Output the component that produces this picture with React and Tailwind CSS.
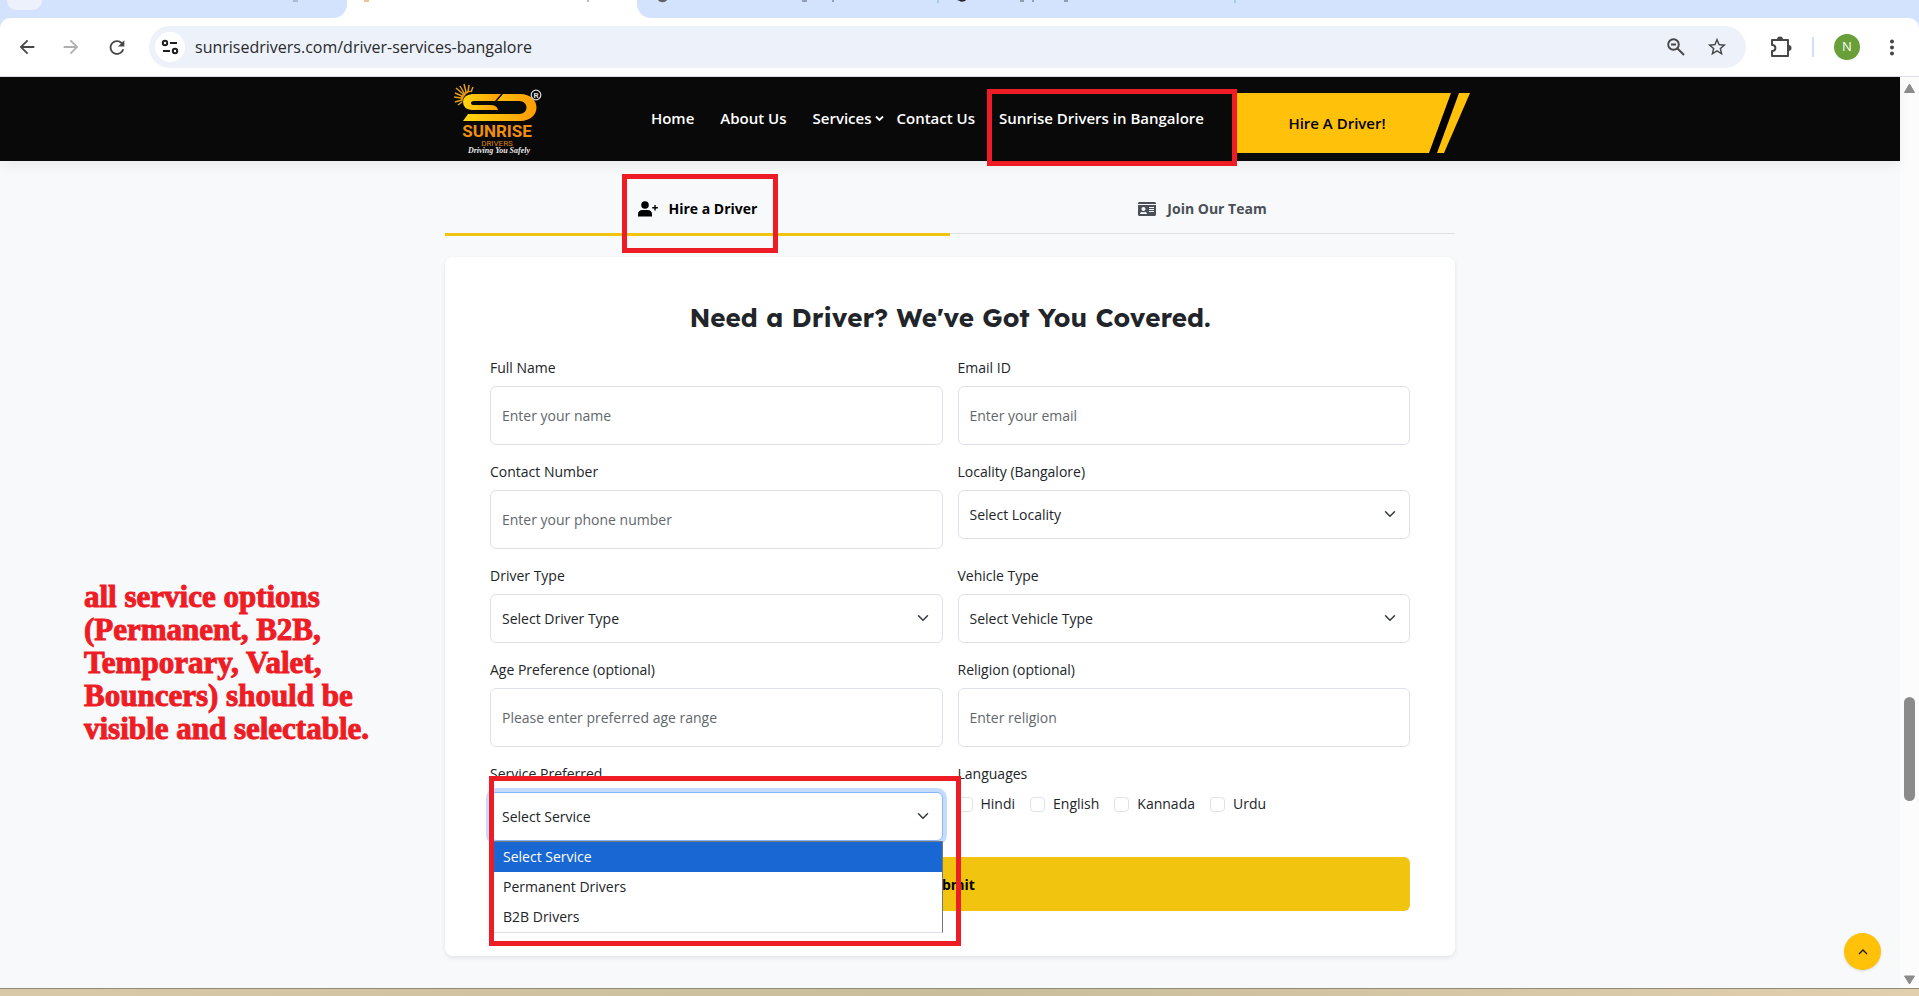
import { MdArrowBack, MdArrowForward, MdRefresh, MdStarBorder, MdMoreVert } from "react-icons/md";
import { FaIdCard } from "react-icons/fa";

const LANGUAGES = ["Hindi", "English", "Kannada", "Urdu"];

function Marker({ className }) {
  return <div aria-hidden="true" className={`pointer-events-none absolute z-20 border-[5px] border-[#ee1c24] ${className}`} />;
}

function TabStrip() {
  return (
    <div className="flex h-[18px] bg-white">
      <div className="h-full w-[347px] shrink-0 rounded-br-[14px] bg-[#d3e2fd]">
        <svg width="347" height="18" aria-hidden="true">
          <path d="M7 0h35c0 6-4 10-10 10H17C11 10 7 6 7 0z" fill="#ecf1fb" />
          <path d="M293 1h5" stroke="#8b93a3" strokeWidth="1" />
        </svg>
      </div>
      <div className="h-full w-[290px] shrink-0">
        <svg width="290" height="18" aria-hidden="true">
          <path d="M17 0h5v2h-5z" fill="#e8c58f" />
          <path d="M241 0v2" stroke="#777" />
        </svg>
      </div>
      <div className="h-full grow overflow-hidden rounded-bl-[14px] bg-[#d3e2fd]">
        <svg width="640" height="18" aria-hidden="true">
          <path d="M21 0h9c-2 3-7 3-9 0z" fill="#5f6368" />
          <path d="M165 1h5M196 0v2" stroke="#555b66" />
          <path d="M301 0v3M598 0v3" stroke="#a8c7fa" strokeWidth="2" />
          <path d="M320 0h9c-1 2-6 2-6 1z" fill="#222" />
          <path d="M383 1h4M396 0v2M427 1h4" stroke="#555b66" />
        </svg>
      </div>
    </div>
  );
}

function BrowserBar() {
  return (
    <div className="bg-[#d3e2fd]">
      <div className="flex h-[59px] items-center rounded-t-[10px] border-b border-[#dcdfe3] bg-white pr-[15px] pl-4 text-[#474747]">
        <button type="button" aria-label="Back" className="mr-[22px] flex size-[22px] items-center justify-center">
          <MdArrowBack size={22} />
        </button>
        <button type="button" aria-label="Forward" className="mr-6 flex size-[22px] items-center justify-center text-[#b0b0b0]">
          <MdArrowForward size={22} />
        </button>
        <button type="button" aria-label="Reload" className="mr-[21px] flex size-[22px] items-center justify-center">
          <MdRefresh size={23} />
        </button>
        <div className="flex h-[42px] grow items-center rounded-full bg-[#ecf1fa] pr-[18px] pl-[6px]">
          <button type="button" aria-label="Site information" className="flex size-[30px] shrink-0 items-center justify-center rounded-full bg-white">
            <svg width="18" height="18" viewBox="0 0 18 18" fill="none" stroke="#1f1f1f" strokeWidth="2" aria-hidden="true">
              <circle cx="4" cy="5" r="2.2" />
              <path d="M9 5h7M2 13h7" />
              <circle cx="14" cy="13" r="2.2" />
            </svg>
          </button>
          <input
            aria-label="Address"
            defaultValue="sunrisedrivers.com/driver-services-bangalore"
            className="ml-[10px] min-w-0 grow bg-transparent text-[16px] text-[#2a2a2a] outline-none"
          />
          <button type="button" aria-label="Zoom" className="mr-5 flex size-5 items-center justify-center">
            <svg width="20" height="20" viewBox="0 0 20 20" fill="none" stroke="#474747" strokeWidth="1.9" aria-hidden="true">
              <circle cx="7.5" cy="7.5" r="5.3" />
              <path d="M5 7.500h5M11.500 11.500l6.500 6.500" />
            </svg>
          </button>
          <button type="button" aria-label="Bookmark" className="flex size-[22px] items-center justify-center">
            <MdStarBorder size={22} />
          </button>
        </div>
        <button type="button" aria-label="Extensions" className="ml-6 flex size-[22px] items-center justify-center">
          <svg width="22" height="22" viewBox="0 0 22 22" fill="none" stroke="#474747" strokeWidth="2" strokeLinejoin="round" aria-hidden="true">
            <path d="M2 4h16v16H2v-5c4.500 0 4.500-6 0-6z" />
            <path d="M7 3.500a3 3 0 0 1 6 0zM18.500 9a3 3 0 0 1 0 6z" fill="#474747" stroke="none" />
          </svg>
        </button>
        <span className="ml-5 h-5 w-[2px] bg-[#cfdffc]" />
        <button type="button" aria-label="Profile" className="ml-5 flex size-[26px] items-center justify-center rounded-full bg-[#689f38] text-[13px] text-white">
          N
        </button>
        <button type="button" aria-label="Menu" className="ml-5 flex size-6 items-center justify-center">
          <MdMoreVert size={25} />
        </button>
      </div>
    </div>
  );
}

function Logo() {
  return (
    <a href="#home" aria-label="Sunrise Drivers" className="block shrink-0">
      <svg width="90" height="76" viewBox="0 0 90 76" aria-hidden="true">
        <defs>
          <linearGradient id="gold" x1="0" x2="1" y1="0" y2="0">
            <stop offset="0" stopColor="#ffd60f" />
            <stop offset="1" stopColor="#ff9c06" />
          </linearGradient>
        </defs>
        <path
          d="M17 11L19 6M14 11L15 4M12 11L10 3M10 12L6 5M9 13L2 7M8 15L1 12M7 17L0 16M8 19L1 21M8 21L4 24"
          stroke="#e2a01a"
          strokeWidth="1.500"
        />
        <path d="M19 10.500q-9 0-11 11-3-5 1-9t10-2z" fill="#e2930f" />
        <g fill="url(#gold)">
          <path d="M18 13h29l-6 7H20q-3 0-3 2t3 2h16q7 0 8 5H18q-9-1-9-8t9-8z" />
          <path d="M49 13h17c22 0 22 27 0 27H9l5-7h51c10 0 10-13 0-13H43z" />
        </g>
        <circle cx="82" cy="14" r="4.800" fill="#0a0a0a" stroke="#ddd" strokeWidth="1.200" />
        <text x="82" y="17" textAnchor="middle" fontSize="8" fontWeight="700" fill="#ddd" fontFamily="Roboto, sans-serif">R</text>
        <text x="43" y="56" textAnchor="middle" fontSize="17" fontWeight="700" fill="#f0900f" fontFamily="Roboto, sans-serif">SUNRISE</text>
        <text x="43" y="65" textAnchor="middle" fontSize="8" fill="#d9860f" fontFamily="Roboto, sans-serif">DRIVERS</text>
        <text x="45" y="72" textAnchor="middle" fontSize="8" fontStyle="italic" fontWeight="700" fill="#e8e8e8" fontFamily="Liberation Serif, serif">Driving You Safely</text>
      </svg>
    </a>
  );
}

function SiteHeader() {
  return (
    <header className="bg-[#090909] shadow-[0_4px_12px_rgba(0,0,0,0.06)]">
      <div className="mx-auto flex h-[84px] w-full max-w-[1040px] items-center pl-6">
        <Logo />
        <nav className="ml-auto flex items-center pb-0.5 text-[15px] leading-5 font-semibold whitespace-nowrap text-white">
          <a href="#home">Home</a>
          <a href="#about" className="ml-[26px]">About Us</a>
          <a href="#services" className="ml-[26px] flex items-center">
            Services
            <svg className="ml-1" width="9" height="7" viewBox="0 0 9 7" fill="none" stroke="currentColor" strokeWidth="1.800" aria-hidden="true">
              <path d="M1 1.500l3.500 3.500 3.500-3.500" />
            </svg>
          </a>
          <a href="#contact" className="ml-3">Contact Us</a>
          <div className="relative mr-7 ml-6">
            <a href="#bangalore">Sunrise Drivers in Bangalore</a>
            <Marker className="-top-[19px] -right-[33px] -bottom-[38px] -left-[12px]" />
          </div>
        </nav>
        <a href="#hire" className="relative mt-2 flex h-[60px] w-[238px] shrink-0 items-center justify-center pr-7 text-[15px] font-semibold text-black">
          <svg className="absolute inset-0" width="238" height="60" viewBox="0 0 238 60" aria-hidden="true">
            <path d="M0 0h238l-26 60H0z" fill="#ffc10a" />
            <path d="M219 0h8l-22 60h-8z" fill="#000" />
          </svg>
          <span className="relative">Hire A Driver!</span>
        </a>
      </div>
    </header>
  );
}

function TextField({ id, label, placeholder, type = "text" }) {
  return (
    <div className="flex flex-col">
      <label htmlFor={id} className="mb-[7px] leading-[22px]">{label}</label>
      <input
        id={id}
        type={type}
        placeholder={placeholder}
        className="h-[59px] w-full rounded-md border border-[#dee2e6] bg-white px-[11px] outline-none placeholder:text-[#62676c]"
      />
    </div>
  );
}

function SelectField({ id, label, option, open, children }) {
  return (
    <div className="relative flex flex-col">
      <label htmlFor={id} className="mb-[7px] leading-[22px]">{label}</label>
      <div className="relative">
        <select
          id={id}
          className={`h-[49px] w-full appearance-none rounded-md border bg-white px-[11px] outline-none ${
            open ? "border-[#86b7fe] shadow-[0_0_0_4px_#c2dbfe]" : "border-[#dee2e6]"
          }`}
        >
          <option>{option}</option>
        </select>
        <svg className="pointer-events-none absolute top-[18px] right-[14px]" width="12" height="12" viewBox="0 0 16 16" fill="none" stroke="#343a40" strokeWidth="2" strokeLinecap="round" strokeLinejoin="round" aria-hidden="true">
          <path d="m2 5 6 6 6-6" />
        </svg>
      </div>
      {children}
    </div>
  );
}

function ServiceMenu() {
  return (
    <ul role="listbox" aria-label="Service options" className="absolute top-full left-0 z-10 w-full border-t border-r border-b border-t-[#767676] border-r-[#767676] border-b-[#dcdfe3] bg-white leading-[30px]">
      <li role="option" aria-selected="true" className="bg-[#1967d2] px-[13px] text-white">Select Service</li>
      <li role="option" aria-selected="false" className="px-[13px]">Permanent Drivers</li>
      <li role="option" aria-selected="false" className="px-[13px]">B2B Drivers</li>
    </ul>
  );
}

function HireForm() {
  return (
    <form className="mt-[21px] rounded-lg bg-white p-[45px] shadow-[0_2px_5px_rgba(0,0,0,0.09)]">
      <h2 className="mb-[23px] text-center font-[Lexend,Inter,sans-serif] text-[26px] leading-8 font-bold text-[#212529]">
        Need a Driver? We've Got You Covered.
      </h2>
      <div className="grid grid-cols-2 gap-x-[15px] gap-y-4">
        <TextField id="name" label="Full Name" placeholder="Enter your name" />
        <TextField id="email" type="email" label="Email ID" placeholder="Enter your email" />
        <TextField id="phone" type="tel" label="Contact Number" placeholder="Enter your phone number" />
        <SelectField id="locality" label="Locality (Bangalore)" option="Select Locality" />
        <SelectField id="driver" label="Driver Type" option="Select Driver Type" />
        <SelectField id="vehicle" label="Vehicle Type" option="Select Vehicle Type" />
        <TextField id="age" label="Age Preference (optional)" placeholder="Please enter preferred age range" />
        <TextField id="religion" label="Religion (optional)" placeholder="Enter religion" />
        <SelectField id="service" label="Service Preferred" option="Select Service" open>
          <ServiceMenu />
          <Marker className="top-[13px] -right-[18px] -bottom-[105px] -left-px" />
        </SelectField>
        <fieldset>
          <legend className="mb-[7px] leading-[22px]">Languages</legend>
          <div className="flex gap-[15px]">
            {LANGUAGES.map((name) => (
              <label key={name} className="flex items-center gap-2 leading-6">
                <input type="checkbox" className="size-[15px] appearance-none rounded-[4px] border border-[#dee2e6] bg-white" />
                {name}
              </label>
            ))}
          </div>
        </fieldset>
      </div>
      <button type="submit" className="mt-4 h-[54px] w-full rounded-md bg-[#f1c40f] font-bold text-black">
        Submit
      </button>
    </form>
  );
}

function Scrollbar() {
  return (
    <div aria-hidden="true" className="flex w-[19px] shrink-0 flex-col items-center bg-[#fcfcfc] pt-1">
      <svg width="13" height="14" viewBox="0 0 13 14"><path d="M6.500 3l5 8.500H1.500z" fill="#8b8b8b" stroke="#8b8b8b" strokeLinejoin="round" /></svg>
      <div className="grow-[600]" />
      <div className="h-[104px] w-[11px] rounded-full bg-[#8b8b8b]" />
      <div className="grow-[173]" />
      <svg width="13" height="14" viewBox="0 0 13 14"><path d="M1.500 2h10l-5 8z" fill="#8b8b8b" stroke="#8b8b8b" strokeLinejoin="round" /></svg>
    </div>
  );
}

export default function App() {
  return (
    <div className="flex min-h-screen flex-col bg-[#d0c2a0] font-['Open_Sans','Noto_Sans',sans-serif] text-[14px] text-[#212529]">
      <TabStrip />
      <BrowserBar />
      <div className="flex grow">
        <div className="relative min-w-0 grow bg-[#f8f9fb]">
          <SiteHeader />
          <main className="mx-auto w-full max-w-[1010px] pt-[21px] pb-8">
            <div role="tablist" className="grid h-[54px] grid-cols-2 items-start font-bold">
              <button type="button" role="tab" aria-selected="true" className="flex h-[54px] items-center justify-center border-b-[3px] border-[#f1c40f] pt-0.5 text-black">
                <span className="relative flex items-center gap-[11px]">
                  <svg width="20" height="16" viewBox="0 0 20 16" fill="currentColor" aria-hidden="true">
                    <circle cx="7" cy="4" r="3.800" />
                    <path d="M0 15.500v-2Q0 9 4.500 9h5q4.500 0 4.500 4.500v2z" />
                    <path d="M16.300 4h1.400v2.100h2.100v1.400h-2.100v2.100h-1.400V7.500h-2.100V6.100h2.100z" />
                  </svg>
                  Hire a Driver
                  <Marker className="-top-[24px] -right-[21px] -bottom-[34px] -left-[16px]" />
                </span>
              </button>
              <button type="button" role="tab" aria-selected="false" className="flex h-[52px] items-center justify-center gap-[11px] border-b border-[#dee2e6] pt-0.5 text-[#495057]">
                <FaIdCard size={16} className="w-[18px]" />
                Join Our Team
              </button>
            </div>
            <HireForm />
          </main>
          <p className="absolute top-[503px] left-[84px] w-[310px] font-['Liberation_Serif',serif] text-[31px] leading-[33px] font-bold text-[#ee1c24] [-webkit-text-stroke:1px_#ee1c24]">
            all service options
            <br />
            (Permanent, B2B,
            <br />
            Temporary, Valet,
            <br />
            Bouncers) should be
            <br />
            visible and selectable.
          </p>
          <button type="button" aria-label="Back to top" className="absolute right-[19px] bottom-[18px] flex size-[37px] items-center justify-center rounded-full bg-[#ffc10a] shadow-sm">
            <svg width="10" height="6" viewBox="0 0 10 6" fill="none" stroke="#1b1b1b" strokeWidth="1.300" aria-hidden="true">
              <path d="M1 5l4-4 4 4" />
            </svg>
          </button>
        </div>
        <Scrollbar />
      </div>
      <div className="h-2 border-t border-[#8f8b7c] bg-linear-to-r from-[#d9c9a8] via-[#c9bd9b] to-[#e2cfae]" />
    </div>
  );
}
